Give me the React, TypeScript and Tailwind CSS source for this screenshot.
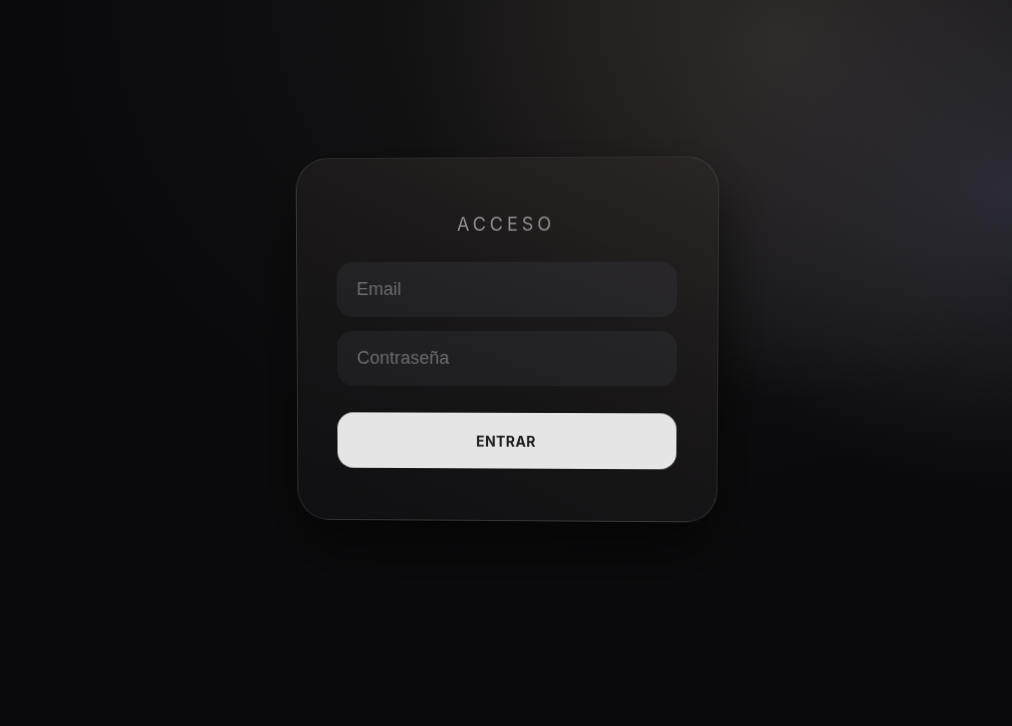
import React from "react";

export default function App() {
  return (
    <div
      className="relative w-full h-[726px] overflow-hidden bg-[#0a0a0c] flex items-center justify-center"
      style={{ fontFamily: "Inter, 'Liberation Sans', sans-serif" }}
    >
      <div className="pointer-events-none absolute inset-0 bg-[radial-gradient(ellipse_600px_500px_at_640px_0px,rgba(24,23,24,0.9),transparent)]" />
      <div className="pointer-events-none absolute inset-0 bg-[radial-gradient(ellipse_380px_360px_at_780px_40px,rgba(52,46,42,0.85),transparent)]" />
      <div className="pointer-events-none absolute inset-0 bg-[radial-gradient(ellipse_360px_300px_at_1010px_190px,rgba(50,50,62,0.75),transparent)]" />
      <div className="perspective-[1000px] mt-[-46px] ml-[0px]">
        <div className="w-[422px] rounded-[32px] border border-white/10 bg-[linear-gradient(205deg,#2b2624_0%,#1a1819_40%,#0f0f11_100%)] px-[40px] pt-[52px] pb-[52px] shadow-[0_30px_60px_rgba(0,0,0,0.6)] rotate-x-[-1.5deg] rotate-y-[-1.9deg]">
          <h1 className="text-center text-[18px] leading-[28px] tracking-[0.22em] text-[#8f8f8f] font-normal mb-[23px]">
            ACCESO
          </h1>
          <input
            placeholder="Email"
            className="block w-full h-[55px] rounded-[16px] bg-[linear-gradient(200deg,#29272a,#1f1f22)] px-[20px] text-[18px] text-[#ddd] placeholder-[#6b6b6e] outline-none"
            style={{ fontFamily: "'Liberation Sans', Arial, sans-serif" }}
          />
          <input
            placeholder="Contraseña"
            type="password"
            className="block w-full h-[55px] mt-[14px] rounded-[16px] bg-[linear-gradient(200deg,#252427,#1d1d20)] px-[20px] text-[18px] text-[#ddd] placeholder-[#6b6b6e] outline-none"
            style={{ fontFamily: "'Liberation Sans', Arial, sans-serif" }}
          />
          <button className="block w-full h-[56px] mt-[27px] rounded-[16px] bg-[#e5e5e5] text-[14px] font-bold tracking-[0.03em] text-[#1c1c1c]">
            ENTRAR
          </button>
        </div>
      </div>
    </div>
  );
}
